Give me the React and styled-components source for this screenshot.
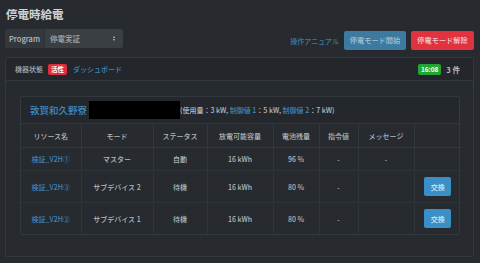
import React from "react";
import styled, { createGlobalStyle } from "styled-components";

const Global = createGlobalStyle`
  html, body { margin: 0; padding: 0; background: #272b30; }
  body {
    font-family: "Noto Sans CJK JP", "Noto Sans", "Liberation Sans", sans-serif;
    color: #b8bcc0;
    width: 480px; height: 263px; overflow: hidden;
  }
`;

const Page = styled.div`
  padding: 4px 6px 0 5px;
`;

const Title = styled.h1`
  margin: 0 0 0 1px;
  height: 19px;
  font-size: 11.5px;
  line-height: 20px;
  font-weight: 700;
  color: #d0d2d4;
`;

const Toolbar = styled.div`
  display: flex;
  justify-content: space-between;
  align-items: flex-start;
  margin-top: 6px;
  height: 21px;
`;

const InputGroup = styled.div`
  display: flex;
  height: 19px;
  width: 118px;
  border-radius: 3px;
  overflow: hidden;
  background: #363b40;
`;

const Addon = styled.div`
  display: flex;
  align-items: center;
  width: 40px;
  justify-content: center;
  box-sizing: border-box;
  font-size: 7.5px;
  font-weight: 500;
  color: #b8bcc0;
  background: #33383d;
  border-right: 1px solid #2c3035;
`;

const Select = styled.div`
  flex: 1;
  display: flex;
  align-items: center;
  justify-content: space-between;
  padding: 0 8px 0 5px;
  font-size: 7.5px;
  font-weight: 500;
  color: #a8acb0;
  background: #3a3f44;
`;

const Arrows = styled.span`
  display: flex;
  flex-direction: column;
  gap: 1px;
  & > i {
    display: block;
    width: 0; height: 0;
    border-left: 1.5px solid transparent;
    border-right: 1.5px solid transparent;
  }
  & > i:first-child { border-bottom: 2px solid #c8c8c8; }
  & > i:last-child { border-top: 2px solid #c8c8c8; }
`;

const Actions = styled.div`
  display: flex;
  align-items: center;
  gap: 5px;
  margin-top: 2px;
`;

const ManualLink = styled.a`
  font-size: 7px;
  font-weight: 500;
  color: #3f78a2;
  text-decoration: none;
  white-space: nowrap;
`;

const Btn = styled.button`
  height: 19px;
  padding: 0;
  border: none;
  border-radius: 2px;
  font-family: inherit;
  font-size: 7.2px;
  font-weight: 500;
  line-height: 19px;
  white-space: nowrap;
  background: ${p => (p.$danger ? "#e0323f" : "#3c7aa0")};
  color: ${p => (p.$danger ? "#f4d0d4" : "#a6c2d4")};
  width: ${p => p.$w || "auto"};
`;

const Panel = styled.div`
  margin-top: 7px;
  border: 1px solid #33383d;
  border-radius: 2px;
  height: 200px;
  box-sizing: border-box;
`;

const PanelHead = styled.div`
  height: 22px;
  display: flex;
  align-items: center;
  justify-content: space-between;
  padding: 0 13px 0 9px;
  background: #23272b;
  border-bottom: 1px solid #33383d;
  font-size: 7px;
  font-weight: 500;
`;

const HeadGroup = styled.div`
  display: flex;
  align-items: center;
  gap: 5px;
  color: #a8acb0;
`;

const Badge = styled.span`
  display: inline-block;
  padding: 0 3px;
  height: 11px;
  line-height: 11px;
  font-size: 6.5px;
  font-weight: 700;
  border-radius: 2px;
  color: #fff;
  background: ${p => (p.$green ? "#22a532" : "#e02c3c")};
`;

const Count = styled.span`
  font-size: 7.5px;
  font-weight: 700;
  color: #b8bcc0;
`;

const DashLink = styled.a`
  color: #3b87bd;
  text-decoration: none;
  margin-left: 1px;
`;

const PanelBody = styled.div`
  padding: 15px 13px 0 14px;
`;

const Card = styled.div`
  border: 1px solid #33383d;
  border-radius: 2px;
`;

const CardHead = styled.div`
  height: 26px;
  display: flex;
  align-items: center;
  padding: 0 9px;
  background: #24282c;
  border-bottom: 1px solid #33383d;
`;

const Site = styled.span`
  font-size: 9.5px;
  color: #3f8ac2;
  font-weight: 500;
`;

const Redact = styled.span`
  display: inline-block;
  width: 91px;
  height: 18px;
  background: #000;
  margin-left: 2px;
`;

const Usage = styled.span`
  font-size: 7px;
  font-weight: 500;
  color: #b8bcc0;
  white-space: nowrap;
`;

const Hl = styled.span`
  color: #3f8ac2;
`;

const Table = styled.table`
  width: 100%;
  border-collapse: collapse;
  table-layout: fixed;
  font-size: 7px;
  font-weight: 500;
`;

const Th = styled.th`
  height: 23px;
  padding: 0;
  font-weight: 500;
  color: #b4b8bc;
  text-align: center;
  border-right: 1px solid #33383d;
  border-bottom: 1px solid #33383d;
  &:last-child { border-right: none; }
`;

const Td = styled.td`
  height: ${p => (p.$tall ? "31px" : "22px")};
  padding: 0;
  text-align: center;
  color: #b4b8bc;
  border-right: 1px solid #2f3439;
  border-bottom: 1px solid #2f3439;
  &:last-child { border-right: none; }
  tr:last-child > & { border-bottom: none; }
`;

const ResLink = styled.a`
  color: #3b87bd;
  text-decoration: none;
`;

const SwapBtn = styled.button`
  width: 27px;
  height: 19px;
  padding: 0;
  border: none;
  border-radius: 2px;
  background: #3a8fc8;
  color: #d8e8f2;
  font-family: inherit;
  font-size: 7px;
  font-weight: 500;
`;

const widths = [60, 72, 54, 66, 46, 39, 56, 47];
const headers = ["リソース名", "モード", "ステータス", "放電可能容量", "電池残量", "指令値", "メッセージ", ""];
const rows = [
  { name: "検証_V2H①", mode: "マスター", status: "自動", cap: "16 kWh", bat: "96 %", cmd: "-", msg: "-", swap: false },
  { name: "検証_V2H③", mode: "サブデバイス 2", status: "待機", cap: "16 kWh", bat: "80 %", cmd: "-", msg: "", swap: true },
  { name: "検証_V2H②", mode: "サブデバイス 1", status: "待機", cap: "16 kWh", bat: "80 %", cmd: "-", msg: "", swap: true },
];

export default function App() {
  return (
    <Page>
      <Global />
      <Title>停電時給電</Title>
      <Toolbar>
        <InputGroup>
          <Addon>Program</Addon>
          <Select>
            <span>停電実証</span>
            <Arrows><i /><i /></Arrows>
          </Select>
        </InputGroup>
        <Actions>
          <ManualLink>操作アニュアル</ManualLink>
          <Btn $w="62px">停電モード開始</Btn>
          <Btn $danger $w="63px">停電モード解除</Btn>
        </Actions>
      </Toolbar>
      <Panel>
        <PanelHead>
          <HeadGroup>
            <span>機器状態</span>
            <Badge>活性</Badge>
            <DashLink>ダッシュボード</DashLink>
          </HeadGroup>
          <HeadGroup>
            <Badge $green>16:08</Badge>
            <Count>3 件</Count>
          </HeadGroup>
        </PanelHead>
        <PanelBody>
          <Card>
            <CardHead>
              <Site>敦賀和久野寮</Site>
              <Redact />
              <Usage>
                (使用量：3 kW, <Hl>制御値 1</Hl>：5 kW, <Hl>制御値 2</Hl>：7 kW)
              </Usage>
            </CardHead>
            <Table>
              <colgroup>
                {widths.map((w, i) => <col key={i} style={{ width: w }} />)}
              </colgroup>
              <thead>
                <tr>{headers.map((h, i) => <Th key={i}>{h}</Th>)}</tr>
              </thead>
              <tbody>
                {rows.map((r, i) => (
                  <tr key={i}>
                    <Td $tall={r.swap}><ResLink>{r.name}</ResLink></Td>
                    <Td $tall={r.swap}>{r.mode}</Td>
                    <Td $tall={r.swap}>{r.status}</Td>
                    <Td $tall={r.swap}>{r.cap}</Td>
                    <Td $tall={r.swap}>{r.bat}</Td>
                    <Td $tall={r.swap}>{r.cmd}</Td>
                    <Td $tall={r.swap}>{r.msg}</Td>
                    <Td $tall={r.swap}>{r.swap && <SwapBtn>交換</SwapBtn>}</Td>
                  </tr>
                ))}
              </tbody>
            </Table>
          </Card>
        </PanelBody>
      </Panel>
    </Page>
  );
}
